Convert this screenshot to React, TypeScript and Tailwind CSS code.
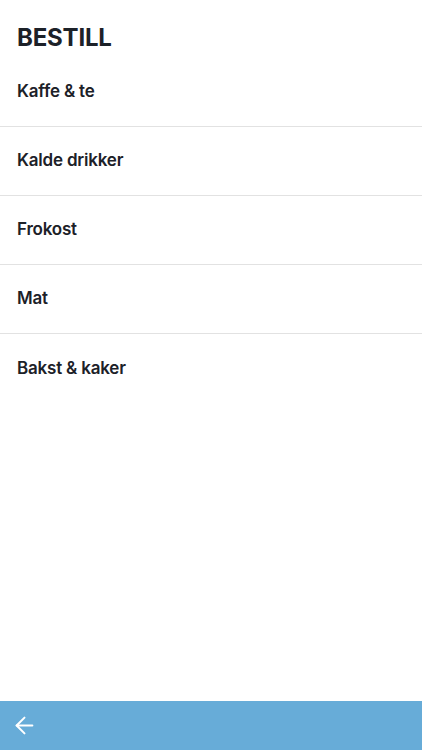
import React from 'react';
import { ArrowLeft } from 'lucide-react';

const categories = ['Kaffe & te', 'Kalde drikker', 'Frokost', 'Mat', 'Bakst & kaker'];

const App = () => {
    return (
        <div className="flex flex-col h-screen bg-white font-['Inter',sans-serif] text-[#1c2128]">
            {/* Title */}
            <div className="px-[17px] pt-[23px] pb-[6px]">
                <h1 className="text-[24px] leading-[29px] font-bold tracking-[-0.2px]">BESTILL</h1>
            </div>

            {/* Category list */}
            <div className="flex-1">
                {categories.map((c, i) => (
                    <div
                        key={c}
                        className={
                            i < categories.length - 1
                                ? 'h-[69px] flex items-center px-[17px] border-b border-[#e2e2e2]'
                                : 'h-[69px] flex items-center px-[17px]'
                        }
                    >
                        <span className="text-[17px] font-semibold tracking-[-0.2px]">{c}</span>
                    </div>
                ))}
            </div>

            {/* Bottom bar */}
            <div className="h-[49px] bg-[#67acd8] flex items-center pl-[11px]">
                <ArrowLeft className="w-[27px] h-[27px] text-white" strokeWidth={1.8} />
            </div>
        </div>
    );
};

export default App;
